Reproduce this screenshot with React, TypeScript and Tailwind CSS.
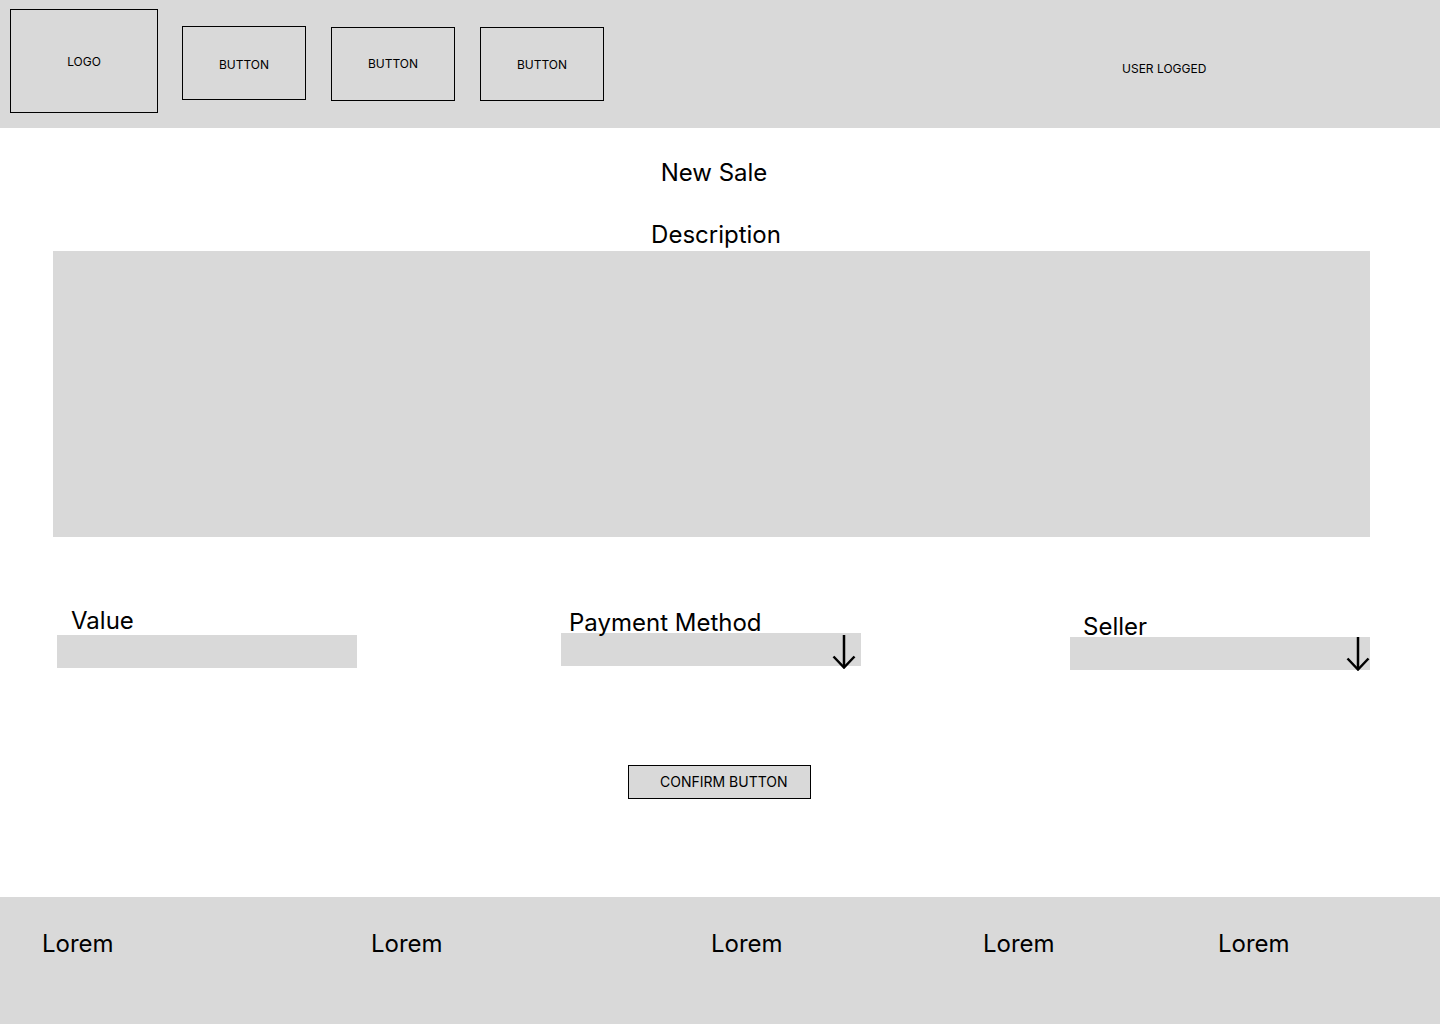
import React from 'react'

const font = "font-['Inter','Liberation_Sans',sans-serif]"

function DownArrow() {
  return (
    <svg width="24" height="34" viewBox="0 0 24 34" fill="none" stroke="#000" strokeWidth="2.5">
      <line x1="12" y1="0" x2="12" y2="32" />
      <polyline points="1.5,21.5 12,32.5 22.5,21.5" />
    </svg>
  )
}

function NavBox({ label, className }: { label: string; className: string }) {
  return (
    <div className={`flex items-center justify-center border border-black text-[12px] text-black ${className}`}>
      {label}
    </div>
  )
}

export default function App() {
  return (
    <div className={`w-[1440px] h-[1024px] bg-white flex flex-col text-black ${font}`}>
      {/* Header */}
      <header className="h-[128px] shrink-0 bg-[#d9d9d9] flex items-start">
        <NavBox label="LOGO" className="ml-[10px] mt-[9px] w-[148px] h-[104px] pt-[2px]" />
        <NavBox label="BUTTON" className="ml-[24px] mt-[26px] w-[124px] h-[74px] pt-[3px]" />
        <NavBox label="BUTTON" className="ml-[25px] mt-[27px] w-[124px] h-[74px]" />
        <NavBox label="BUTTON" className="ml-[25px] mt-[27px] w-[124px] h-[74px] pt-[2px]" />
        <div className="ml-[518px] mt-[61px] text-[12px] leading-[16px]">USER LOGGED</div>
      </header>

      {/* Main */}
      <main className="h-[769px] shrink-0 flex flex-col">
        <h1 className="mt-[33px] text-center pr-[12px] text-[24px] leading-[24px] font-normal">New Sale</h1>
        <h2 className="mt-[38px] text-center pr-[8px] text-[24px] leading-[24px] font-normal">Description</h2>
        <div className="mt-[4px] ml-[53px] w-[1317px] h-[286px] bg-[#d9d9d9]" />

        <div className="mt-[72px] h-[60px] flex items-start pl-[57px]">
          <div className="w-[300px] flex flex-col">
            <span className="relative z-10 pl-[14px] text-[24px] leading-[24px]">Value</span>
            <div className="mt-[2px] h-[33px] bg-[#d9d9d9]" />
          </div>
          <div className="ml-[204px] mt-[2px] w-[300px] flex flex-col">
            <span className="relative z-10 pl-[8px] text-[24px] leading-[24px]">Payment Method</span>
            <div className="relative -mt-[2px] h-[33px] bg-[#d9d9d9]">
              <div className="absolute right-[5px] top-[2px]">
                <DownArrow />
              </div>
            </div>
          </div>
          <div className="ml-[209px] mt-[6px] w-[300px] flex flex-col">
            <span className="relative z-10 pl-[13px] text-[24px] leading-[24px]">Seller</span>
            <div className="relative -mt-[2px] h-[33px] bg-[#d9d9d9]">
              <div className="absolute right-[0px] top-0">
                <DownArrow />
              </div>
            </div>
          </div>
        </div>

        <div className="mt-[96px] ml-[628px]">
          <button className="w-[183px] h-[34px] border border-black bg-[#d9d9d9] text-[14px] leading-[16px] text-left pl-[31px] pb-[1px]">
            CONFIRM BUTTON
          </button>
        </div>
      </main>

      {/* Footer */}
      <footer className="h-[127px] shrink-0 bg-[#d9d9d9] flex items-start pl-[42px] pt-[35px] text-[24px] leading-[24px]">
        <span className="w-[329px]">Lorem</span>
        <span className="w-[340px]">Lorem</span>
        <span className="w-[272px]">Lorem</span>
        <span className="w-[235px]">Lorem</span>
        <span>Lorem</span>
      </footer>
    </div>
  )
}
